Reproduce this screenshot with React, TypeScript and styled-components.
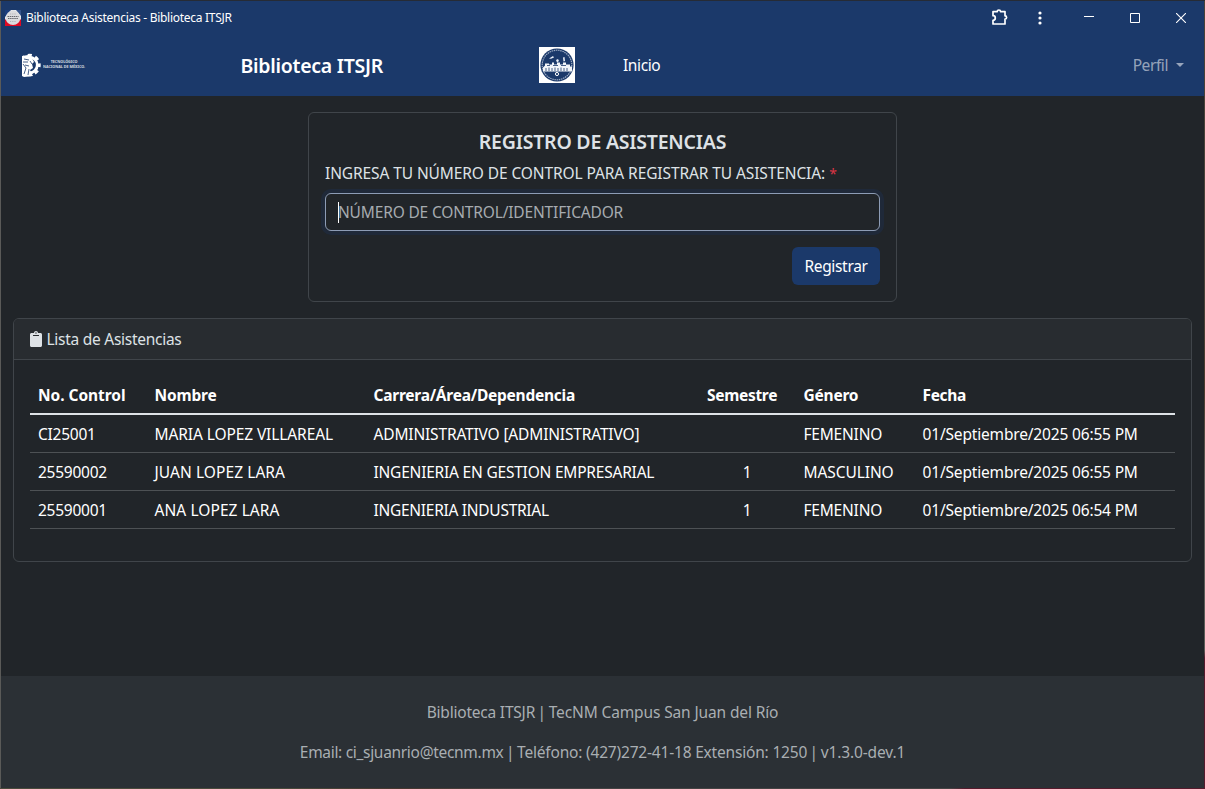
import React from "react";
import styled, { createGlobalStyle } from "styled-components";

const GlobalStyle = createGlobalStyle`
  *, *::before, *::after { box-sizing: border-box; }
  body {
    margin: 0;
    background: #212529;
    color: #dee2e6;
    font: 400 15.5px/24px "Noto Sans", "Open Sans", sans-serif;
  }
`;

/* Text run with its own tracking, in px */
const Run = styled.span<{ $track?: number }>`
  white-space: nowrap;
  letter-spacing: ${(p) => p.$track ?? 0}px;
`;

const Window = styled.div`
  width: 1205px;
  height: 789px;
  padding: 1px;
  overflow: hidden;
  background:
    linear-gradient(#262b35, #262b35) top / 100% 1px no-repeat,
    linear-gradient(90deg, #4a4a3c 0 280px, #46362f 400px, #454343 520px 950px, #561a2c 965px) bottom / 100% 1px no-repeat,
    linear-gradient(#4a4238 0 300px, #4d3a2c 390px, #5c5c57 480px 650px, #561a2c 658px) right / 1px 100% no-repeat,
    #5a5a58;
`;

const Surface = styled.div`
  display: flex;
  flex-direction: column;
  height: 100%;
  background: #212529;
`;

const TitleBar = styled.header`
  display: flex;
  align-items: center;
  height: 34px;
  padding-left: 4px;
  background: #1b396a;
  color: #fff;
`;

const WindowTitle = styled.div`
  margin-left: 5px;
  font-size: 12px;
  line-height: 16px;
`;

const Controls = styled.div`
  display: flex;
  align-items: center;
  margin-left: auto;
`;

const Control = styled.div<{ $w: number }>`
  display: flex;
  align-items: center;
  justify-content: center;
  width: ${(p) => p.$w}px;
  height: 32px;
`;

const NavBar = styled.nav`
  display: flex;
  align-items: center;
  height: 61px;
  padding: 0 20px 1px;
  background: #1b396a;
  color: #fff;
`;

const Brand = styled.div`
  margin-left: 153.5px;
  width: 298.5px;
  padding-top: 1px;
  font-size: 19.5px;
  font-weight: 600;
  line-height: 30px;
`;

const NavLink = styled.a`
  margin-left: 48px;
  color: #fff;
`;

const Profile = styled.a`
  display: flex;
  align-items: center;
  gap: 8px;
  margin-left: auto;
  color: rgba(255, 255, 255, 0.55);
`;

const Caret = styled.span`
  border: 4px solid transparent;
  border-top-color: currentColor;
  border-bottom: 0;
`;

const Main = styled.main`
  display: flex;
  flex-direction: column;
  flex: 1;
  padding: 16px 12px 0;
`;

const FormCard = styled.section`
  display: flex;
  flex-direction: column;
  align-self: center;
  width: 589px;
  height: 190px;
  padding: 16px;
  border: 1px solid #40454a;
  border-radius: 6px;
`;

const FormTitle = styled.h1`
  margin: 0;
  padding: 1px 0 7px;
  font-size: 19.5px;
  font-weight: 600;
  line-height: 24px;
  text-align: center;
`;

const Label = styled.label`
  margin-bottom: 8px;
`;

const Required = styled.span`
  color: #dc3545;
  font-size: 14px;
  line-height: 1;
`;

const Field = styled.div`
  display: flex;
  align-items: center;
  height: 38px;
  padding: 0 12px;
  border: 1px solid #8d9cb5;
  border-radius: 6px;
  box-shadow: 0 0 0 4px rgba(27, 57, 106, 0.25);
  color: #a6abb0;
`;

const TextCursor = styled.i`
  width: 1px;
  height: 21px;
  margin-right: -1px;
  background: #fff;
`;

const SubmitButton = styled.button`
  align-self: flex-end;
  width: 88px;
  height: 38px;
  margin-top: 16px;
  padding: 0;
  border: 0;
  border-radius: 6px;
  background: #1b396a;
  color: #fff;
  font: inherit;
`;

const ListCard = styled.section`
  height: 244px;
  margin-top: 16px;
  border: 1px solid #40454a;
  border-radius: 6px;
`;

const ListHeader = styled.h2`
  display: flex;
  align-items: center;
  gap: 4.5px;
  height: 41px;
  margin: 0;
  padding: 0 16px;
  border-bottom: 1px solid #40454a;
  border-radius: 5px 5px 0 0;
  background: #282c30;
  font: inherit;
`;

const Table = styled.table`
  width: 1145px;
  margin: 16px 16px 0;
  border-collapse: separate;
  border-spacing: 0;
  table-layout: fixed;
  color: #fff;
`;

const Col = styled.col<{ $w: number }>`
  width: ${(p) => p.$w}px;
`;

const HeadCell = styled.th`
  height: 39px;
  padding: 1px 8px 0;
  border-bottom: 2px solid #dee2e6;
  font-weight: 700;
  text-align: left;
`;

const Cell = styled.td<{ $center?: boolean }>`
  height: 38px;
  padding: 1px 8px 0;
  border-bottom: 1px solid #4d5154;
  text-align: ${(p) => (p.$center ? "center" : "left")};
`;

const Footer = styled.footer`
  display: flex;
  flex-direction: column;
  align-items: center;
  gap: 16px;
  height: 112px;
  padding-top: 24px;
  background: #2b3035;
  color: #a9aeb2;
`;

const FooterLine = styled.div`
  white-space: nowrap;
`;

const Divider = styled.span`
  margin: 0 -1.5px;
`;

const Favicon = () => (
  <svg width="16" height="16" viewBox="0 0 16 16">
    <path d="M0 0h16v16H0z" fill="#e8ebf0" />
    <path d="M0 0h6L0 7z" fill="#1b3d7c" />
    <path d="M11 0h5v6z" fill="#35558d" />
    <path d="M0 9.5h16V16H0z" fill="#e00a24" />
    <circle cx="8" cy="7.8" r="7.3" fill="#dcdcde" />
    <path d="M2.5 6.5h11M3 8.5h10" stroke="#66676d" strokeWidth="1.1" strokeDasharray="1.5 .6" />
    <path d="M5 4h6M5 11.5h6" stroke="#b4b4b8" strokeDasharray="1 .8" />
  </svg>
);

const PuzzleIcon = () => (
  <svg width="18" height="18" viewBox="0 0 18 18" fill="none" stroke="#fff" strokeWidth="1.7" strokeLinejoin="round">
    <path d="M2 2.6h4.3a1.6 1.6 0 0 1 3.200 0H14v4.200a1.600 1.600 0 0 1 0 3.200V15H2v-3.700a2.300 2.300 0 0 0 0-4.600z" />
  </svg>
);

const DotsIcon = () => (
  <svg width="4" height="14" viewBox="0 0 4 14" fill="#fff">
    <circle cx="2" cy="2" r="1.6" />
    <circle cx="2" cy="7" r="1.6" />
    <circle cx="2" cy="12" r="1.6" />
  </svg>
);

const MinimizeIcon = () => (
  <svg width="10" height="10" viewBox="0 0 10 10">
    <path d="M0 3.5h10" stroke="#fff" />
  </svg>
);

const MaximizeIcon = () => (
  <svg width="10" height="10" viewBox="0 0 10 10">
    <path d="M.5.5h9v9h-9z" fill="none" stroke="#fff" />
  </svg>
);

const CloseIcon = () => (
  <svg width="10" height="10" viewBox="0 0 10 10">
    <path d="M0 0l10 10M10 0L0 10" stroke="#fff" strokeWidth="1.1" />
  </svg>
);

const TecnmMark = styled.div`
  display: flex;
  align-items: center;
  gap: 2px;
  width: 66px;
  height: 26px;
  padding-left: 1px;
  color: #fff;
`;

const TecnmName = styled.div`
  display: flex;
  flex-direction: column;
  align-items: center;
  font-size: 3.7px;
  font-weight: 700;
  line-height: 4.6px;
  opacity: 0.8;
`;

const TecnmLogo = () => (
  <TecnmMark>
    <svg width="19" height="25" viewBox="0 0 19 25">
      <circle cx="7.5" cy="12" r="7.8" fill="none" stroke="#fff" strokeWidth="2.8" />
      <circle cx="7.5" cy="12" r="9.7" fill="none" stroke="#fff" strokeWidth="3" strokeDasharray="4 3.62" strokeDashoffset="2" />
      <path d="M0 3l6-1 4 3 2 4-2 2 1 4-3 2 3 6-9 1-2-1z" fill="#fff" />
      <path d="M2 6l5 1M1 9h5M3 12l4 1M4 15l-2 6M7 16l-1 6M1 11l3 4M8 8l2 3" stroke="#1b396a" strokeWidth=".8" />
    </svg>
    <TecnmName>
      <Run>TECNOLÓGICO</Run>
      <Run>NACIONAL DE MÉXICO.</Run>
    </TecnmName>
  </TecnmMark>
);

const LibrarySeal = () => (
  <svg width="36" height="36" viewBox="0 0 36 36">
    <path d="M0 0h36v36H0z" fill="#fff" />
    <circle cx="18" cy="18" r="16.6" fill="#1b396a" />
    <circle cx="18" cy="18" r="14.8" fill="none" stroke="#9dacc4" strokeWidth="1.2" strokeDasharray="1.5 .7" />
    <path d="M10 11.5l4-2.5 1 1.5-3 1.2zM17 13l2-1 1 2-2 1.5zM24 10.5l1.500-.5.5 4-1.500.5z" fill="#e8edf5" />
    <path d="M6 18.5v-2h4v1h3v-2h2v2h3v-2h3v2h3v-2h3v2h4v2h2v5H4v-4z" fill="#f2f5f9" />
    <path d="M7 24v-3M10 24v-3.500M13 24v-3M16 24v-3.500M19 24v-3M22 24v-3.500M25 24v-3M28 24v-3M8 18.500h3M14 18.500h5M22 18.500h5" stroke="#1b396a" strokeWidth=".8" />
    <circle cx="18" cy="27" r="1.6" fill="none" stroke="#fff" />
  </svg>
);

const ClipboardIcon = () => (
  <svg width="12" height="16" viewBox="0 0 384 512" fill="#dee2e6">
    <path d="M384 112v352c0 26.500-21.500 48-48 48H48c-26.500 0-48-21.500-48-48V112c0-26.500 21.500-48 48-48h80c0-35.300 28.700-64 64-64s64 28.700 64 64h80c26.500 0 48 21.500 48 48zM192 40c-13.300 0-24 10.700-24 24s10.700 24 24 24 24-10.700 24-24-10.700-24-24-24m96 114v-20a6 6 0 0 0-6-6H102a6 6 0 0 0-6 6v20a6 6 0 0 0 6 6h180a6 6 0 0 0 6-6z" />
  </svg>
);

type Column = { title: string; width: number; track: number; center?: boolean };

const columns: Column[] = [
  { title: "No. Control", width: 116.5, track: -0.05 },
  { title: "Nombre", width: 219, track: -0.15 },
  { title: "Carrera/Área/Dependencia", width: 333.5, track: -0.25 },
  { title: "Semestre", width: 96.5, track: -0.3, center: true },
  { title: "Género", width: 119, track: -0.22 },
  { title: "Fecha", width: 260.5, track: -0.35 },
];

/* Each cell: text and tracking */
const rows: [string, number][][] = [
  [
    ["CI25001", -0.25],
    ["MARIA LOPEZ VILLAREAL", -0.1],
    ["ADMINISTRATIVO [ADMINISTRATIVO]", -0.16],
    ["", 0],
    ["FEMENINO", -0.2],
    ["01/Septiembre/2025 06:55 PM", -0.17],
  ],
  [
    ["25590002", -0.25],
    ["JUAN LOPEZ LARA", 0.07],
    ["INGENIERIA EN GESTION EMPRESARIAL", -0.21],
    ["1", 0],
    ["MASCULINO", -0.08],
    ["01/Septiembre/2025 06:55 PM", -0.17],
  ],
  [
    ["25590001", -0.25],
    ["ANA LOPEZ LARA", 0.07],
    ["INGENIERIA INDUSTRIAL", -0.28],
    ["1", 0],
    ["FEMENINO", -0.2],
    ["01/Septiembre/2025 06:54 PM", -0.17],
  ],
];

export default function App() {
  return (
    <>
      <GlobalStyle />
      <Window>
        <Surface>
          <TitleBar>
            <Favicon />
            <WindowTitle>
              <Run $track={-0.28}>Biblioteca Asistencias - Biblioteca ITSJR</Run>
            </WindowTitle>
            <Controls>
              <Control $w={40}><PuzzleIcon /></Control>
              <Control $w={39}><DotsIcon /></Control>
              <Control $w={7} />
              <Control $w={46}><MinimizeIcon /></Control>
              <Control $w={46}><MaximizeIcon /></Control>
              <Control $w={46}><CloseIcon /></Control>
            </Controls>
          </TitleBar>
          <NavBar>
            <TecnmLogo />
            <Brand><Run $track={-0.27}>Biblioteca ITSJR</Run></Brand>
            <LibrarySeal />
            <NavLink><Run $track={-0.4}>Inicio</Run></NavLink>
            <Profile>
              <Run $track={-0.42}>Perfil</Run>
              <Caret />
            </Profile>
          </NavBar>
          <Main>
            <FormCard>
              <FormTitle><Run $track={-0.22}>REGISTRO DE ASISTENCIAS</Run></FormTitle>
              <Label>
                <Run $track={-0.1}>INGRESA TU NÚMERO DE CONTROL PARA REGISTRAR TU ASISTENCIA:</Run> <Required>*</Required>
              </Label>
              <Field>
                <TextCursor />
                <Run $track={-0.16}>NÚMERO DE CONTROL/IDENTIFICADOR</Run>
              </Field>
              <SubmitButton><Run $track={-0.33}>Registrar</Run></SubmitButton>
            </FormCard>
            <ListCard>
              <ListHeader>
                <ClipboardIcon />
                <Run $track={-0.27}>Lista de Asistencias</Run>
              </ListHeader>
              <Table>
                <colgroup>
                  {columns.map((c) => <Col key={c.title} $w={c.width} />)}
                </colgroup>
                <thead>
                  <tr>
                    {columns.map((c) => (
                      <HeadCell key={c.title}><Run $track={c.track}>{c.title}</Run></HeadCell>
                    ))}
                  </tr>
                </thead>
                <tbody>
                  {rows.map((row) => (
                    <tr key={row[0][0]}>
                      {row.map(([text, track], i) => (
                        <Cell key={i} $center={columns[i].center}><Run $track={track}>{text}</Run></Cell>
                      ))}
                    </tr>
                  ))}
                </tbody>
              </Table>
            </ListCard>
          </Main>
          <Footer>
            <FooterLine>
              <Run $track={-0.21}>Biblioteca ITSJR</Run>
              <Divider> | </Divider>
              <Run $track={-0.13}>TecNM Campus San Juan del Río</Run>
            </FooterLine>
            <FooterLine>
              <Run $track={-0.31}>Email: ci_sjuanrio@tecnm.mx</Run>
              <Divider> | </Divider>
              <Run $track={-0.19}>Teléfono: (427)272-41-18 Extensión: 1250</Run>
              <Divider> | </Divider>
              <Run $track={-0.13}>v1.3.0-dev.1</Run>
            </FooterLine>
          </Footer>
        </Surface>
      </Window>
    </>
  );
}
